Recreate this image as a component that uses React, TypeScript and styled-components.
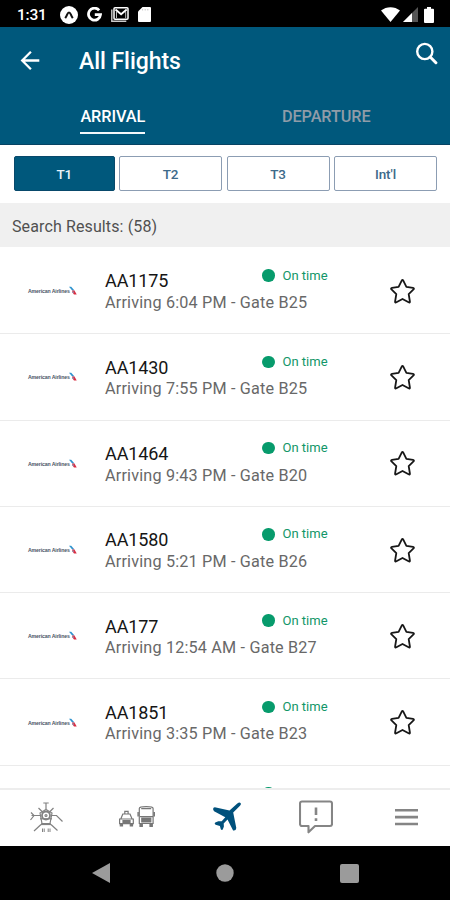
import React from 'react';
import styled, { createGlobalStyle } from 'styled-components';

const GlobalStyle = createGlobalStyle`
  * { box-sizing: border-box; }
  body { margin: 0; background: #fff; font-family: Roboto, 'Liberation Sans', sans-serif; }
  svg { display: block; flex: none; }
  button { font: inherit; border: 0; padding: 0; background: none; color: inherit; }
`;

const Screen = styled.div`
  width: 450px;
  height: 900px;
  display: flex;
  flex-direction: column;
  overflow: hidden;
  background: #fff;
`;

const StatusBar = styled.div`
  height: 27px;
  flex: none;
  display: flex;
  align-items: center;
  padding: 2px 16px 0 17px;
  background: #000;
  color: #fff;
`;

const Clock = styled.span`
  width: 43px;
  font-size: 15.5px;
  font-weight: 500;
  line-height: 18px;
  letter-spacing: -0.2px;
`;

const StatusIcons = styled.div<{ $gap: number; $end?: boolean }>`
  display: flex;
  align-items: center;
  gap: ${(p) => p.$gap}px;
  margin-left: ${(p) => (p.$end ? 'auto' : '0')};
`;

const Header = styled.header`
  height: 118px;
  flex: none;
  background: #00587c;
  border-bottom: 1px solid #064363;
  color: #fff;
`;

const TitleRow = styled.div`
  height: 68px;
  display: flex;
  align-items: center;
  padding: 0 12px 0 20px;
`;

const Title = styled.h1`
  flex: 1;
  margin: 2px 0 0 39px;
  font-size: 23px;
  font-weight: 500;
  line-height: 28px;
  letter-spacing: -0.05px;
`;

const SearchButton = styled.button`
  margin-bottom: 16px;
`;

const Tabs = styled.div`
  display: flex;
  padding: 0 17px 0 6px;
`;

const Tab = styled.div<{ $active?: boolean }>`
  flex: 1;
  display: flex;
  justify-content: center;
  color: ${(p) => (p.$active ? '#fff' : '#8f9ca8')};
`;

const TabLabel = styled.span<{ $active?: boolean }>`
  height: 39px;
  padding-top: 12px;
  font-size: 16.3px;
  font-weight: 500;
  line-height: 20px;
  letter-spacing: -0.1px;
  border-bottom: 2px solid ${(p) => (p.$active ? '#f4f8fb' : 'transparent')};
`;

const Filters = styled.div`
  height: 58px;
  flex: none;
  display: grid;
  grid-template-columns: 100.5px repeat(3, 1fr);
  gap: 4.5px;
  padding: 11px 13px 12px 14px;
`;

const Filter = styled.button<{ $active?: boolean }>`
  border: 1px solid ${(p) => (p.$active ? '#08496b' : '#8c9db3')};
  border-radius: 2px;
  background: ${(p) => (p.$active ? '#00587c' : '#fff')};
  color: ${(p) => (p.$active ? '#e9f2f8' : '#3d6a8a')};
  font-size: 13.5px;
  font-weight: 500;
  letter-spacing: -0.1px;
`;

const Results = styled.div`
  height: 44px;
  flex: none;
  padding: 14px 12px 10px;
  background: #f0f0f0;
  color: #505050;
  font-size: 16px;
  line-height: 20px;
  letter-spacing: 0.12px;
`;

const List = styled.main`
  height: 541px;
  flex: none;
  overflow: hidden;
  padding-top: 1px;
`;

const FlightRow = styled.div`
  height: 86.3px;
  display: grid;
  grid-template-columns: 105px 1fr 95px;
  border-bottom: 1px solid #ebebeb;
`;

const LogoCell = styled.div`
  display: flex;
  align-items: center;
  padding: 1px 0 0 28px;
`;

const AirlineName = styled.span`
  width: 41px;
  color: #4b5566;
  font-family: 'Liberation Sans', sans-serif;
  font-size: 5.2px;
  font-weight: 700;
  letter-spacing: -0.13px;
  line-height: 8px;
  white-space: nowrap;
`;

const Details = styled.div`
  padding-top: 17px;
`;

const TopLine = styled.div`
  height: 28px;
  display: flex;
`;

const FlightNumber = styled.div`
  width: 157px;
  padding-top: 5.4px;
  color: #151515;
  font-size: 18px;
  line-height: 22px;
  letter-spacing: -0.1px;
`;

const Status = styled.div`
  display: flex;
  height: 20px;
  align-items: center;
  gap: 8px;
  color: #129668;
  font-size: 13px;
`;

const Dot = styled.i`
  width: 12.5px;
  height: 12.5px;
  margin-top: 1px;
  border-radius: 50%;
  background: #079b6c;
`;

const Arrival = styled.div`
  color: #686868;
  font-size: 16.2px;
  line-height: 20px;
  letter-spacing: 0.18px;
  white-space: nowrap;
`;

const Favorite = styled.button`
  display: flex;
  align-items: center;
  padding: 1px 0 0 34px;
`;

const BottomNav = styled.nav`
  height: 58px;
  flex: none;
  display: grid;
  grid-template-columns: repeat(5, 90px);
  align-items: center;
  justify-items: center;
  padding: 0 0 2px 1px;
  border-top: 2px solid #ededed;
  background: #fff;
`;

const SystemNav = styled.div`
  height: 54px;
  flex: none;
  display: flex;
  align-items: center;
  justify-content: space-between;
  padding: 0 91px 0 92px;
  background: #000;
`;

const flights = [
  ['AA1175', '6:04 PM', 'B25'],
  ['AA1430', '7:55 PM', 'B25'],
  ['AA1464', '9:43 PM', 'B20'],
  ['AA1580', '5:21 PM', 'B26'],
  ['AA177', '12:54 AM', 'B27'],
  ['AA1851', '3:35 PM', 'B23'],
];

const CircleAppIcon = () => (
  <svg width="18" height="18" viewBox="0 0 18 18">
    <circle cx="9" cy="9" r="9" fill="#fff" />
    <path d="M5.2 12.2c2.4-3.2 2.1-5.8 3.8-5.8s1.4 2.6 3.8 5.8" fill="none" stroke="#111" strokeWidth="2" />
  </svg>
);

const GoogleIcon = () => (
  <svg width="15" height="15" viewBox="0 0 15 15" fill="none" stroke="#fff" strokeWidth="2.8">
    <path d="M12.1 3.3A6 6 0 1 0 13.5 7.7H7.8" />
  </svg>
);

const MailIcon = () => (
  <svg width="18" height="15" viewBox="0 0 18 15" fill="none">
    <path d="M.8 2.5v11.7h14.5" stroke="#ccc" strokeWidth="1.4" />
    <rect x="3" y=".8" width="14" height="11.5" rx="1" stroke="#fff" strokeWidth="1.5" />
    <path d="M5.5 4.5V11M14.7 4.5V11" stroke="#bbb" strokeWidth="1" />
    <path d="m4.5 2.5 5.6 4.7 5.6-4.7" stroke="#fff" strokeWidth="1.9" />
  </svg>
);

const CardIcon = () => (
  <svg width="13" height="15" viewBox="0 0 13 15">
    <path d="M4.5 0H12a1 1 0 0 1 1 1v13a1 1 0 0 1-1 1H1a1 1 0 0 1-1-1V4.5Z" fill="#fff" />
    <path d="M4.6 2v1.5M7.2 2v1.5M9.8 2v1.5" stroke="#bbb" strokeWidth=".8" />
  </svg>
);

const WifiIcon = () => (
  <svg width="19" height="15" viewBox="0 0 19 15">
    <path d="M0 3.5C5.5-1 13.5-1 19 3.5L9.5 15Z" fill="#fff" />
  </svg>
);

const SignalIcon = () => (
  <svg width="15" height="15" viewBox="0 0 15 15">
    <path d="M15 0v15H0Z" fill="#555" />
    <path d="M9 6v9H0Z" fill="#fff" />
  </svg>
);

const BatteryIcon = () => (
  <svg width="10" height="16" viewBox="0 0 10 16">
    <path d="M3 0h4v1.7h2a1 1 0 0 1 1 1V15a1 1 0 0 1-1 1H1a1 1 0 0 1-1-1V2.7a1 1 0 0 1 1-1h2Z" fill="#fff" />
  </svg>
);

const BackIcon = () => (
  <svg width="20" height="20" viewBox="0 0 20 20" fill="none" stroke="#fff" strokeWidth="2.3">
    <path d="M19.3 9.5H2.5M10.9.8 2.2 9.5l8.7 8.7" />
  </svg>
);

const SearchIcon = () => (
  <svg width="23" height="23" viewBox="0 0 23 23" fill="none" stroke="#fff">
    <circle cx="9.8" cy="9.5" r="7.6" strokeWidth="2.4" />
    <path d="m15.2 15 5.7 5.7" strokeWidth="3" strokeLinecap="round" />
  </svg>
);

const AirlineMark = () => (
  <svg width="8" height="10" viewBox="0 0 8 10">
    <path d="M0 .7h2.2L5.5 4.5H3.2Z" fill="#2f93ce" />
    <path d="M3.2 4.5h2.3l2.2 4H5L3.4 6.4Z" fill="#d92e43" />
    <path d="m2.9 6.3 1.7-1v2Z" fill="#75a9cd" />
  </svg>
);

const StarIcon = () => (
  <svg width="27" height="27" viewBox="0 0 27 27" fill="none">
    <path
      d="M12.7 2.6q.8-1.5 1.6 0l3.1 6.3 6.6 1q1.6.3.5 1.5l-4.8 4.7 1.2 7.4q.1 1.6-1.3.8L13.5 21l-6.1 3.3q-1.4.8-1.3-.8l1.2-7.4-4.8-4.7Q1.4 10.2 3 9.9l6.6-1Z"
      stroke="#171717"
      strokeWidth="1.8"
      strokeLinejoin="round"
    />
  </svg>
);

const TerminalIcon = () => (
  <svg width="34" height="34" viewBox="0 0 34 34" fill="none" stroke="#828282" strokeWidth="1.2">
    <path d="M17 3v6M14.3 3h5.4M9.5 8l4.5 4.5M24.5 8 20 12.5" />
    <path d="M12 15.5H2.5M2 12.5l3 3L1.5 20M22 15.5h5.5l6 6M12 24.5 5 31M22 24.5l6.5 6" />
    <path d="m11 13 2 10.5h8L23 13l-6-3.5Z" />
    <circle cx="17" cy="15.5" r="4" strokeWidth="1.8" />
    <circle cx="17" cy="15.5" r="1" />
    <path d="M11 18.8h12" />
    <path d="M12 24.2h10" strokeWidth="1.8" />
    <path d="M13.5 28.5V32M15.2 28.5V32M19.2 28.5V32M21 28.5V32" strokeWidth="1" />
  </svg>
);

const TransitIcon = () => (
  <svg width="37" height="24" viewBox="0 0 37 24" fill="none" stroke="#777" strokeWidth="1.2">
    <path d="m2.8 14 2-5h7.2l2.1 5M6.8 8.4V6.3h3.3v2.1M1.6 14h13.7v4.6H1.6Z" />
    <path d="M5 15.5h7v3H5Z" fill="#777" />
    <path d="M2.3 18.5V21h2.2v-2.5M12.3 18.5V21h2.2v-2.5" fill="#777" />
    <path d="M21.3 18.5v-15c0-2.4 13.8-2.4 13.8 0v15ZM22 11.6h12.5M23.2 3.7h10M20 7v4.5M36.4 7v4.5" />
    <path d="M23.8 13h9v4h-9Z" fill="#777" />
    <path d="M22 18.5V21.5h2.3v-3M32 18.5v3h2.3v-3" fill="#777" />
  </svg>
);

const PlaneIcon = () => (
  <svg width="30" height="30" viewBox="0 0 30 30">
    <path
      d="M26.3 1.5q2.2-1.8 3.2-.5 1 1-.5 2.7l-6.8 6.9 3.1 15.3q-.3 3.2-3.2 2.6l-5.6-10.9-3.8 4 .2 3-1.1 3q-1.2 1-2-.4l-.9-3.1-4.3-1.4q-1.6-1-.3-2.1l3-1.4 3.4.1 3.6-4.1L3.1 9.3Q.8 6 3.8 5.3l14.7 3.3Z"
      fill="#00517c"
    />
  </svg>
);

const AlertIcon = () => (
  <svg width="34" height="34" viewBox="0 0 34 34" fill="none" stroke="#858585" strokeWidth="2.1">
    <path d="M3 1.5h28a2 2 0 0 1 2 2V24a2 2 0 0 1-2 2H16l-6.5 6.3V26H3a2 2 0 0 1-2-2V3.5a2 2 0 0 1 2-2Z" strokeLinejoin="round" />
    <path d="M17 7.5V15M17 18.2v2.8" strokeWidth="2.6" />
  </svg>
);

const MenuIcon = () => (
  <svg width="23" height="18" viewBox="0 0 23 18" fill="none" stroke="#858585" strokeWidth="2.6">
    <path d="M0 2.2h23M0 9.1h23M0 16h23" />
  </svg>
);

export default function App() {
  return (
    <>
      <GlobalStyle />
      <Screen>
        <StatusBar>
          <Clock>1:31</Clock>
          <StatusIcons $gap={9}>
            <CircleAppIcon />
            <GoogleIcon />
            <MailIcon />
            <CardIcon />
          </StatusIcons>
          <StatusIcons $gap={3} $end>
            <WifiIcon />
            <SignalIcon />
            <span />
            <BatteryIcon />
          </StatusIcons>
        </StatusBar>
        <Header>
          <TitleRow>
            <BackIcon />
            <Title>All Flights</Title>
            <SearchButton aria-label="Search"><SearchIcon /></SearchButton>
          </TitleRow>
          <Tabs>
            <Tab $active><TabLabel $active>ARRIVAL</TabLabel></Tab>
            <Tab><TabLabel>DEPARTURE</TabLabel></Tab>
          </Tabs>
        </Header>
        <Filters>
          {['T1', 'T2', 'T3', "Int'l"].map((name, i) => (
            <Filter key={name} $active={i === 0}>{name}</Filter>
          ))}
        </Filters>
        <Results>Search Results: (58)</Results>
        <List>
          {flights.map(([number, time, gate]) => (
            <FlightRow key={number}>
              <LogoCell>
                <AirlineName>American Airlines</AirlineName>
                <AirlineMark />
              </LogoCell>
              <Details>
                <TopLine>
                  <FlightNumber>{number}</FlightNumber>
                  <Status><Dot />On time</Status>
                </TopLine>
                <Arrival>Arriving {time} - Gate {gate}</Arrival>
              </Details>
              <Favorite aria-label="Favorite"><StarIcon /></Favorite>
            </FlightRow>
          ))}
          <FlightRow>
            <LogoCell />
            <Details>
              <TopLine>
                <FlightNumber />
                <Status><Dot />On time</Status>
              </TopLine>
            </Details>
          </FlightRow>
        </List>
        <BottomNav>
          <TerminalIcon />
          <TransitIcon />
          <PlaneIcon />
          <AlertIcon />
          <MenuIcon />
        </BottomNav>
        <SystemNav>
          <svg width="18" height="20" viewBox="0 0 18 20"><path d="M18 0v20L0 10Z" fill="#9b9b9b" /></svg>
          <svg width="18" height="18" viewBox="0 0 18 18"><circle cx="9" cy="9" r="8.7" fill="#9b9b9b" /></svg>
          <svg width="19" height="19" viewBox="0 0 19 19"><rect width="19" height="19" rx="2" fill="#9b9b9b" /></svg>
        </SystemNav>
      </Screen>
    </>
  );
}
